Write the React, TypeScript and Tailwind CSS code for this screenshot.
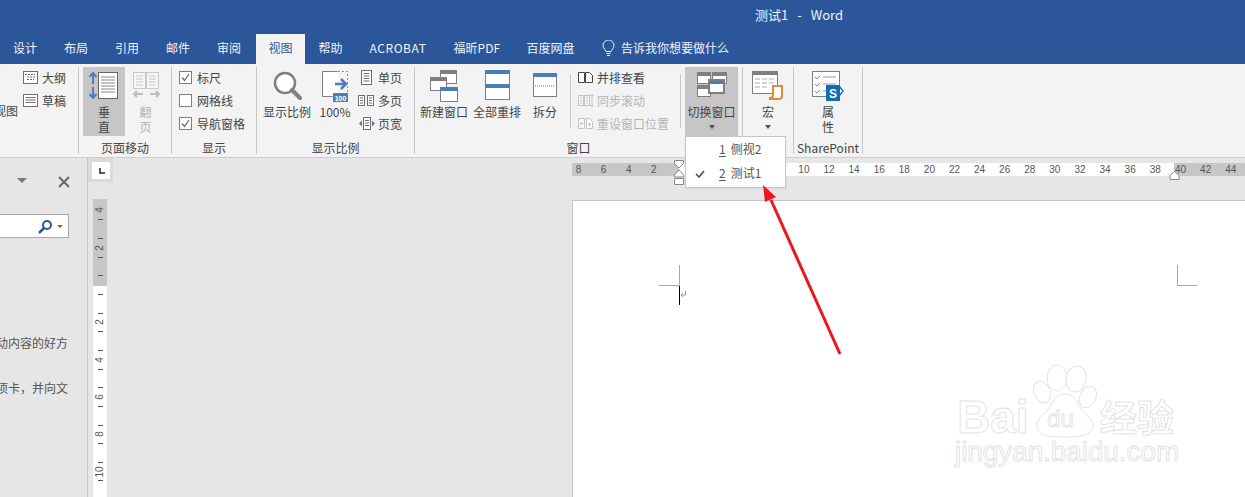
import React from "react";

const cjk = '"Noto Sans CJK SC","Open Sans",sans-serif';

const tabs = ["设计", "布局", "引用", "邮件", "审阅"];
const tabsAfter: [string, string][] = [["帮助", "w-[24px]"], ["ACROBAT", "w-[57px] tracking-[0.55px]"], ["福昕PDF", "w-[46px]"], ["百度网盘", "w-[49px]"]];

function SmallIcon({ kind, disabled }: { kind: string; disabled?: boolean }) {
  const s = disabled ? "#c4c4c4" : "#6f6f6f";
  return (
    <svg width="17" height="15" viewBox="0 0 17 15" fill="none" className="shrink-0">
      {kind === "outline" && (
        <g stroke={s}>
          <rect x="1.5" y="1.5" width="14" height="12" fill="#fff" />
          <path d="M3 4.5h2M6 4.5h7M5 7h8M5 9.5h7" strokeDasharray="2 1" />
        </g>
      )}
      {kind === "draft" && (
        <g stroke={s}>
          <rect x="1.5" y="1.5" width="14" height="12" fill="#fff" />
          <path d="M3.5 4.5h10M3.5 7h10M3.5 9.5h10" />
        </g>
      )}
      {kind === "single" && (
        <g stroke={s}>
          <rect x="3.5" y="0.5" width="10" height="14" fill="#fff" />
          <path d="M5.5 3.5h6M5.5 6h6M5.5 8.5h6M5.5 11h6" />
        </g>
      )}
      {kind === "multi" && (
        <g stroke={s}>
          <rect x="0.5" y="2.5" width="6" height="10" fill="#fff" />
          <rect x="9.5" y="2.5" width="6" height="10" fill="#fff" />
          <path d="M2 5h3M2 7.5h3M2 10h3M11 5h3M11 7.5h3M11 10h3" />
        </g>
      )}
      {kind === "width" && (
        <g>
          <rect x="5.5" y="1.5" width="7" height="12" fill="#fff" stroke={s} />
          <path d="M7 4.5h4M7 7h4M7 9.5h4" stroke={s} />
          <path d="M4 4.5v6l-3-3zM14 4.5v6l3-3z" fill="#4a7ebb" />
        </g>
      )}
      {kind === "side" && (
        <g stroke="#444">
          <path d="M1.5 2.5h6v10h-6zM8.5 2.5h4l3 3v7h-7z" fill="#fff" />
        </g>
      )}
      {kind === "sync" && (
        <g stroke={s}>
          <rect x="1.5" y="2.5" width="5" height="10" fill="#f7f7f7" />
          <rect x="7.5" y="2.5" width="5" height="10" fill="#f7f7f7" />
          <path d="M3 5h2M3 7.5h2M3 10h2M9 5h2M9 7.5h2M9 10h2M15 1v13M13.5 3 15 1l1.5 2M13.5 12l1.5 2 1.5-2" />
        </g>
      )}
      {kind === "reset" && (
        <g stroke={s}>
          <rect x="1.5" y="2.5" width="6" height="10" fill="#f7f7f7" />
          <path d="M9.5 2.5h3l3 3v7h-6z" fill="#f7f7f7" />
          <path d="M3 7.5h3M11 8.5h3M4.5 6v3M12.5 7v3" />
        </g>
      )}
    </svg>
  );
}

function SmallRow({ icon, label, disabled }: { icon: string; label: string; disabled?: boolean }) {
  return (
    <div className={"flex h-[23px] items-center gap-[3px] whitespace-nowrap " + (disabled ? "text-[#b4b4b4]" : "text-[#444]")}>
      <SmallIcon kind={icon} disabled={disabled} />
      <span>{label}</span>
    </div>
  );
}

function Check({ on, label }: { on?: boolean; label: string }) {
  return (
    <div className="flex h-[23px] items-center gap-[5px] whitespace-nowrap text-[#444]">
      <svg width="13" height="13" viewBox="0 0 13 13" fill="none">
        <rect x="0.5" y="0.5" width="12" height="12" fill="#fff" stroke="#7f7f7f" />
        {on && <path d="M3 6.5l2.5 3L10 3" stroke="#666" strokeWidth="1.2" />}
      </svg>
      <span>{label}</span>
    </div>
  );
}

function Group({ w, label, children, pl = "" }: { w: string; label?: string; children?: React.ReactNode; pl?: string }) {
  return (
    <div className={"flex flex-col border-r border-[#c8c8c8] " + w}>
      <div className={"flex h-[69px] " + pl}>{children}</div>
      <div className="mt-[6px] flex h-[16px] items-center justify-center text-[12px] leading-none whitespace-nowrap text-[#444]">{label}</div>
    </div>
  );
}

function Big({ w, lines, icon, active, disabled, caret }: { w: string; lines: string[]; icon: React.ReactNode; active?: boolean; disabled?: boolean; caret?: boolean }) {
  return (
    <div className={"flex h-[69px] shrink-0 flex-col items-center " + w + " " + (active ? "bg-[#c6c6c6] " : "") + (disabled ? "text-[#b4b4b4]" : "text-[#444]")}>
      <div className="flex h-[37px] items-start justify-center pt-[4px]">{icon}</div>
      {lines.map((l) => (
        <div key={l} className="h-[15px] text-center text-[12px] leading-[15px] whitespace-nowrap">{l}</div>
      ))}
      {caret && (
        <div className="flex h-[15px] items-center justify-center">
          <div className="h-0 w-0 border-x-[3.5px] border-t-[4px] border-x-transparent border-t-[#555]" />
        </div>
      )}
    </div>
  );
}

function WinIcon({ x, y, w, h, bar = "#7f7f7f", barH = 4 }: { x: number; y: number; w: number; h: number; bar?: string; barH?: number }) {
  return (
    <g>
      <rect x={x + 0.5} y={y + 0.5} width={w} height={h} fill="#fff" stroke="#7f7f7f" />
      <rect x={x} y={y} width={w + 1} height={barH} fill={bar} />
    </g>
  );
}

const rulerWhite = [2, 4, 6, 8, 10, 12, 14, 16, 18, 20, 22, 24, 26, 28, 30, 32, 34, 36, 38];

function RulerCell({ n }: { n: number }) {
  return <div className="w-[25.1px] shrink-0 text-center leading-[13px]">{n}</div>;
}

const vert: string[] = ["4", "-", "", "-", "2", "-", "", "-", "", "-", "", "-", "2", "-", "", "-", "4", "-", "", "-", "6", "-", "", "-", "8", "-", "", "-", "10", "-", "", "-"];

function VCell({ v }: { v: string }) {
  return (
    <div className="flex h-[9.33px] shrink-0 items-center justify-center">
      {v === "-" ? (
        <div className="h-px w-[5px] bg-[#555]" />
      ) : v ? (
        <span className="-rotate-90 text-[10px] leading-none text-[#555]" style={{ fontFamily: '"Liberation Sans",sans-serif' }}>{v}</span>
      ) : null}
    </div>
  );
}

export default function App() {
  return (
    <div className="relative flex h-[497px] w-[1245px] flex-col overflow-hidden bg-[#e6e6e6] text-[12px]" style={{ fontFamily: cjk }}>
      {/* title */}
      <div className="flex h-[34px] shrink-0 items-center gap-[9px] bg-[#2b579a] pb-[4px] pl-[755px] text-[13px] whitespace-pre text-[#f1f4f9]">
        <span>测试1</span>
        <span>-</span>
        <span>Word</span>
      </div>
      {/* tabs */}
      <div className="flex h-[30px] shrink-0 items-stretch bg-[#2b579a] text-[12px] text-[#f1f4f9]">
        {tabs.map((t) => (
          <div key={t} className="flex items-center px-[13.5px] pb-[2px] first:pl-[13px]">{t}</div>
        ))}
        <div className="ml-[1.5px] flex w-[49px] items-center justify-center bg-[#f3f3f3] pb-[2px] text-[#2b579a]">视图</div>
        {tabsAfter.map(([t, w]) => (
          <div key={t} className="flex items-center px-[13.5px] pb-[2px]">
            <span className={"whitespace-nowrap " + w}>{t}</span>
          </div>
        ))}
        <div className="flex items-center gap-[6px] pb-[2px] pl-[13px]">
          <svg width="13" height="17" viewBox="0 0 13 17" fill="none" stroke="#f1f4f9">
            <path d="M4 11.5C3.5 9.5 1 8.5 1 5.5a5.5 5.5 0 0 1 11 0c0 3-2.5 4-3 6z" />
            <path d="M4.5 13.5h4M5 15.5h3" />
          </svg>
          <span className="whitespace-nowrap">告诉我你想要做什么</span>
        </div>
      </div>
      {/* ribbon */}
      <div className="flex h-[94px] shrink-0 border-b border-[#cfcfcf] bg-[#f3f3f3] pt-[3px] pb-[3px] text-[12px]">
        <Group w="w-[79px]">
          <div className="flex w-full">
            <div className="mt-[36px] w-[22px] overflow-hidden text-[#444]">
              <span className="-ml-[6px] block leading-[15px] whitespace-nowrap">视图</span>
            </div>
            <div className="-mt-[1px] flex flex-col">
              <SmallRow icon="outline" label="大纲" />
              <SmallRow icon="draft" label="草稿" />
            </div>
          </div>
        </Group>
        <Group w="w-[93px]" label="页面移动" pl="pl-[4px]">
          <Big
            w="w-[42px]"
            active
            lines={["垂", "直"]}
            icon={
              <svg width="32" height="29" viewBox="0 0 32 29" fill="none">
                <rect x="10.5" y="1.5" width="19" height="26" fill="#fff" stroke="#666" />
                <path d="M13 6h14M13 9h14M13 12h14M13 15h14M13 18h14M13 21h14" stroke="#888" />
                <path d="M5 2v11M5 16v11M1.5 6 5 2l3.5 4M1.5 23 5 27l3.5-4" stroke="#4a7ebb" strokeWidth="2" />
              </svg>
            }
          />
          <div className="w-[7px]" />
          <Big
            w="w-[27px]"
            disabled
            lines={["翻", "页"]}
            icon={
              <svg width="28" height="28" viewBox="0 0 28 28" fill="none" stroke="#c8c8c8">
                <rect x="1.5" y="1.5" width="12" height="16" fill="#f7f7f7" />
                <rect x="14.5" y="1.5" width="12" height="16" fill="#f7f7f7" />
                <path d="M4 5h7M4 8h7M4 11h7M4 14h7M17 5h7M17 8h7M17 11h7M17 14h7" />
                <path d="M2 23h9M18 23h9M5 20l-3 3 3 3M24 20l3 3-3 3" strokeWidth="2" stroke="#bdbdbd" />
              </svg>
            }
          />
        </Group>
        <Group w="w-[85px]" label="显示" pl="pl-[7px]">
          <div className="-mt-[1px] flex flex-col">
            <Check on label="标尺" />
            <Check label="网格线" />
            <Check on label="导航窗格" />
          </div>
        </Group>
        <Group w="w-[158px]" label="显示比例" pl="pl-[6px]">
          <Big
            w="w-[48px]"
            lines={["显示比例"]}
            icon={
              <svg width="30" height="30" viewBox="0 0 30 30" fill="none">
                <circle cx="13" cy="12" r="10" fill="#fff" stroke="#7f7f7f" strokeWidth="2.5" />
                <path d="M20 19l8 8" stroke="#7f7f7f" strokeWidth="4" strokeLinecap="round" />
              </svg>
            }
          />
          <div className="w-[8px]" />
          <Big
            w="w-[32px]"
            lines={["100%"]}
            icon={
              <svg width="28" height="33" viewBox="0 0 28 33" fill="none" className="-mt-[1px]">
                <path d="M2 2h15v24H2z" fill="#fff" />
                <path d="M16.5 1.5h-15v25h10" stroke="#7f7f7f" />
                <path d="M17 1.5h9.5v21" stroke="#8a8a8a" strokeDasharray="2 2" />
                <path d="M14 14h10M20 9l5 5-5 5" stroke="#4a7ebb" strokeWidth="2.5" />
                <rect x="12" y="23" width="15" height="9" fill="#4a7ebb" />
                <text x="19.5" y="30.5" textAnchor="middle" fontSize="7" fontWeight="700" fill="#fff" fontFamily="Liberation Sans">100</text>
              </svg>
            }
          />
          <div className="-mt-[1px] flex w-[57px] flex-col pl-[7px]">
            <SmallRow icon="single" label="单页" />
            <SmallRow icon="multi" label="多页" />
            <SmallRow icon="width" label="页宽" />
          </div>
        </Group>
        <Group w="w-[328px]" label="窗口" pl="pl-[5px]">
          <Big
            w="w-[48px]"
            lines={["新建窗口"]}
            icon={
              <svg width="28" height="32" viewBox="0 0 28 32" fill="none" className="-mt-[1px]">
                <WinIcon x={10} y={0} w={16} h={13} />
                <WinIcon x={0} y={7} w={16} h={13} />
                <WinIcon x={10} y={17} w={17} h={14} bar="#4a7ebb" />
              </svg>
            }
          />
          <div className="w-[5px]" />
          <Big
            w="w-[48px]"
            lines={["全部重排"]}
            icon={
              <svg width="25" height="30" viewBox="0 0 25 30" fill="none" className="-mt-[1px]">
                <WinIcon x={0} y={0} w={24} h={14} bar="#4a7ebb" />
                <WinIcon x={0} y={14} w={24} h={15} bar="#4a7ebb" />
              </svg>
            }
          />
          <div className="w-[12px]" />
          <Big
            w="w-[24px]"
            lines={["拆分"]}
            icon={
              <svg width="25" height="25" viewBox="0 0 25 25" fill="none" className="mt-[2px]">
                <WinIcon x={0} y={0} w={23} h={23} bar="#4a7ebb" />
                <path d="M2 13h20" stroke="#4a7ebb" strokeDasharray="1 1" />
              </svg>
            }
          />
          <div className="mt-[7px] ml-[13px] h-[54px] w-px bg-[#c8c8c8]" />
          <div className="-mt-[1px] flex w-[109px] flex-col pl-[6px]">
            <SmallRow icon="side" label="并排查看" />
            <SmallRow icon="sync" label="同步滚动" disabled />
            <SmallRow icon="reset" label="重设窗口位置" disabled />
          </div>
          <div className="mt-[7px] h-[54px] w-px bg-[#c8c8c8]" />
          <div className="relative ml-[4px]">
            <Big
              w="w-[53px]"
              active
              caret
              lines={["切换窗口"]}
              icon={
                <svg width="30" height="28" viewBox="0 0 30 28" fill="none">
                  <WinIcon x={0} y={1} w={13} h={11} />
                  <WinIcon x={15} y={1} w={14} h={11} />
                  <WinIcon x={0} y={14} w={13} h={11} />
                  <rect x="12" y="9" width="15" height="13" fill="#fff" stroke="#7f7f7f" strokeWidth="2" />
                  <rect x="13" y="10" width="13" height="3" fill="#4a7ebb" />
                </svg>
              }
            />
            <div className="absolute top-[69px] left-0 z-10 flex h-[52px] w-[101px] flex-col border border-[#c6c6c6] bg-white text-[12px] text-[#555] shadow-[0_1px_2px_rgba(0,0,0,0.08)]">
              <div className="flex h-[24px] items-center pl-[33px]">
                <span className="mr-[5px] underline underline-offset-2">1</span>
                <span>侧视2</span>
              </div>
              <div className="relative flex h-[24px] items-center pl-[33px]">
                <svg width="10" height="8" viewBox="0 0 10 8" fill="none" className="absolute top-[9px] left-[9px]">
                  <path d="M1 4l3 3 5-6" stroke="#444" strokeWidth="1.5" />
                </svg>
                <span className="mr-[5px] underline underline-offset-2">2</span>
                <span>测试1</span>
              </div>
            </div>
          </div>
        </Group>
        <Group w="w-[51px]" pl="justify-center">
          <Big
            w="w-[42px]"
            caret
            lines={["宏"]}
            icon={
              <svg width="32" height="29" viewBox="0 0 32 29" fill="none">
                <rect x="0.5" y="0.5" width="25" height="22" fill="#fff" stroke="#7f7f7f" />
                <rect x="0" y="0" width="26" height="4" fill="#7f7f7f" />
                <path d="M3 8h5M10 8h5M17 8h5M3 12h5M10 12h5M17 12h5M3 16h5M10 16h5" stroke="#aaa" />
                <path d="M21 15h9v10a3 3 0 0 1-3 3h-9v-1a3 3 0 0 0 3-3z" fill="#fff" stroke="#e08a3c" strokeWidth="2" />
              </svg>
            }
          />
        </Group>
        <Group w="w-[69px]" label="SharePoint" pl="justify-center">
          <Big
            w="w-[42px]"
            lines={["属", "性"]}
            icon={
              <svg width="32" height="31" viewBox="0 0 32 31" fill="none">
                <rect x="0.5" y="0.5" width="27" height="25" fill="#fff" stroke="#7f7f7f" />
                <path d="M3 6l2 2 3-3M3 13l2 2 3-3M3 20l2 2 3-3" stroke="#888" />
                <path d="M11 6h13M11 13h13M11 20h6" stroke="#999" />
                <path d="M27 15l4 5-4 5" fill="#fff" stroke="#0f7ac0" strokeWidth="1.5" />
                <rect x="14" y="14" width="14" height="16" fill="#0f6cb5" />
                <text x="21" y="26.5" textAnchor="middle" fontSize="12" fontWeight="700" fill="#fff" fontFamily="Liberation Sans">S</text>
              </svg>
            }
          />
        </Group>
      </div>
      {/* body */}
      <div className="flex min-h-0 flex-1">
        {/* nav pane */}
        <div className="flex w-[88px] shrink-0 flex-col overflow-hidden border-r border-[#c6c6c6] text-[#555]">
          <div className="flex h-[56px] items-start justify-end pt-[19px] pr-[17px]">
            <div className="mt-[1px] mr-[31px] h-0 w-0 border-x-[5px] border-t-[5px] border-x-transparent border-t-[#777]" />
            <svg width="12" height="12" viewBox="0 0 12 12" fill="none" className="-mt-[1px]">
              <path d="M1 1l10 10M11 1L1 11" stroke="#666" strokeWidth="2" />
            </svg>
          </div>
          <div className="flex h-[24px] w-[69px] items-center justify-end border-y border-r border-[#a9a9a9] bg-white pr-[5px]">
            <svg width="15" height="15" viewBox="0 0 15 15" fill="none">
              <circle cx="9" cy="6" r="4" stroke="#2b579a" strokeWidth="2" />
              <path d="M6 9l-5 5" stroke="#2b579a" strokeWidth="2.5" />
            </svg>
            <div className="mt-[1px] ml-[4px] h-0 w-0 border-x-[3px] border-t-[3px] border-x-transparent border-t-[#666]" />
          </div>
          <div className="mt-[96px] flex w-[68px] justify-end text-[12px] leading-[18px] whitespace-nowrap">移动内容的好方</div>
          <div className="mt-[27px] flex w-[68px] justify-end text-[12px] leading-[18px] whitespace-nowrap">选项卡，并向文</div>
        </div>
        {/* left ruler column */}
        <div className="flex w-[25px] shrink-0 flex-col">
          <div className="flex h-[24px] w-[25px] items-center bg-[#dadada] pl-[4px]">
            <div className="flex h-[17px] w-[18px] items-center justify-center bg-white">
              <div className="mt-[1px] ml-[2px] h-[6px] w-[6px] border-b-2 border-l-2 border-[#555]" />
            </div>
          </div>
          <div className="mt-[17px] ml-[5px] flex w-[14px] flex-1 flex-col overflow-hidden bg-white">
            <div className="flex flex-col bg-[#c6c6c6]">
              <div className="h-[6.8px]" />
              {vert.slice(0, 8).map((v, i) => (
                <VCell key={i} v={v} />
              ))}
              <div className="h-[6px]" />
            </div>
            <div className="-mt-[6px] flex flex-col">
              {vert.slice(8).map((v, i) => (
                <VCell key={i} v={v} />
              ))}
            </div>
          </div>
        </div>
        {/* doc area */}
        <div className="flex min-w-0 flex-1 flex-col pl-[459px]">
          <div className="flex h-[42px] shrink-0 pt-[5px]">
            <div className="flex h-[13px] w-[673px] text-[10px] text-[#555]" style={{ fontFamily: '"Liberation Sans",sans-serif' }}>
              <div className="flex w-[107px] bg-[#c6c6c6]">
                <div className="-ml-[6px] flex">
                  {[8, 6, 4, 2].map((n) => <RulerCell key={n} n={n} />)}
                </div>
              </div>
              <div className="flex w-[495px] bg-white pl-[12px]">
                {rulerWhite.map((n) => <RulerCell key={n} n={n} />)}
              </div>
              <div className="flex flex-1 bg-[#c6c6c6]">
                <div className="-ml-[6px] flex">
                  {[40, 42, 44].map((n) => <RulerCell key={n} n={n} />)}
                </div>
              </div>
            </div>
          </div>
          <div className="flex flex-1 justify-between border-t border-l border-[#c6c6c6] bg-white pt-[64px] pr-[48px] pl-[86px]">
            <div className="flex flex-col items-end">
              <div className="h-[21px] w-[21px] border-r border-b border-[#a6a6a6]" />
              <div className="relative h-[19px] w-px bg-black">
                <svg width="7" height="8" viewBox="0 0 7 8" fill="none" className="absolute top-[5px] left-[1px]">
                  <path d="M5.5 0v4H1M3 2 1 4l2 2" stroke="#999" />
                </svg>
              </div>
            </div>
            <div className="h-[21px] w-[20px] border-b border-l border-[#a6a6a6]" />
          </div>
        </div>
      </div>
      {/* indent markers on ruler */}
      <svg width="12" height="26" viewBox="0 0 12 26" fill="none" className="absolute top-[160px] left-[673px] z-20">
        <path d="M1.5 0.5h9v3L6 8 1.5 3.5z" fill="#fff" stroke="#888" />
        <path d="M6 10l4.5 5v2h-9v-2z" fill="#fff" stroke="#888" />
        <path d="M1.5 18.5h9v6h-9z" fill="#fff" stroke="#888" />
      </svg>
      <svg width="11" height="9" viewBox="0 0 11 9" fill="none" className="absolute top-[171px] left-[1169px]">
        <path d="M5.5 0.5l4.5 4v4H1v-4z" fill="#fff" stroke="#888" />
      </svg>
      {/* red arrow */}
      <svg width="120" height="200" viewBox="0 0 120 200" fill="none" className="absolute top-[170px] left-[740px] z-30">
        <path d="M100 184 31 30" stroke="#f0141e" strokeWidth="3" />
        <path d="M23 15 25 32l11-5z" fill="#f0141e" />
      </svg>
      {/* watermark */}
      <svg width="250" height="120" viewBox="0 0 250 120" fill="none" className="absolute top-[360px] left-[945px] z-10">
        <g fill="#fff" stroke="#e4e4e4" strokeWidth="1">
          <ellipse cx="112" cy="18" rx="10" ry="13" />
          <ellipse cx="131" cy="19" rx="10" ry="13" transform="rotate(10 131 19)" />
          <ellipse cx="97" cy="32" rx="8" ry="11" transform="rotate(-25 97 32)" />
          <ellipse cx="143" cy="37" rx="8" ry="11" transform="rotate(25 143 37)" />
          <path d="M120 34c-13 0-12 13-21 20-6 5-8 9-7 13 2 9 12 10 28 10s26-1 28-10c1-4-1-8-7-13-9-7-8-20-21-20z" />
          <text x="12" y="73" fontFamily="Liberation Sans" fontWeight="700" fontSize="46">Bai</text>
          <text x="102" y="67" fontFamily="Liberation Sans" fontSize="24">du</text>
          <text x="155" y="72" fontFamily="Noto Sans CJK SC" fontWeight="700" fontSize="37">经验</text>
          <text x="10" y="101" fontFamily="Liberation Sans" fontSize="27.8">jingyan.baidu.com</text>
        </g>
      </svg>
    </div>
  );
}
